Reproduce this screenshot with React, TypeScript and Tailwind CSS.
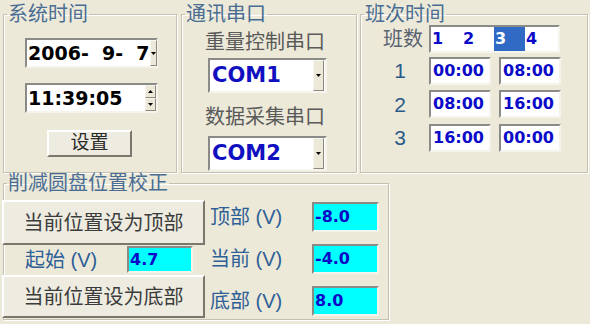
const cjk = "font-['Liberation_Sans','Noto_Sans_CJK_SC',sans-serif]";
const num = "font-['DejaVu_Sans',sans-serif] font-bold";
const sunken = "border-2 border-t-[#8a8a86] border-l-[#8a8a86] border-b-[#f4f3ec] border-r-[#f4f3ec]";
const raised = "border-2 border-t-white border-l-white border-b-[#7a786c] border-r-[#7a786c] bg-[#eeece1]";
const small = "border border-t-[#f7f6f0] border-l-[#f7f6f0] border-b-[#8c8a7e] border-r-[#8c8a7e] bg-[#ECE9D8]";
const group = "border border-[#c4c1b0] shadow-[inset_1px_1px_0_#fff,1px_1px_0_#fff]";
const legend = "ml-[3px] px-[1px] text-[20px] leading-[22px] text-[#4a6d93]";

function Arrow({ up }: { up?: boolean }) {
  return (
    <svg width="5" height="3" viewBox="0 0 5 3">
      <path d={up ? "M2.5 0L5 3H0z" : "M0 0h5L2.5 3z"} fill="#000" />
    </svg>
  );
}

function Combo({ text }: { text: string }) {
  return (
    <div className={`${sunken} ml-[26px] flex h-[35px] w-[119px] items-center bg-white`}>
      <span className={`${num} flex-1 pl-[2px] text-[21px] text-[#1010c0]`}>{text}</span>
      <div className={`${small} mr-[1px] flex h-full w-[11px] items-center justify-center`}>
        <Arrow />
      </div>
    </div>
  );
}

function TimeBox({ text }: { text: string }) {
  return (
    <div className={`${sunken} flex h-[28px] w-[62px] items-center bg-white pl-[2px]`}>
      <span className={`${num} text-[16px] text-[#0a0ac8]`}>{text}</span>
    </div>
  );
}

function Cyan({ text, className = "" }: { text: string; className?: string }) {
  return (
    <div className={`${sunken} flex items-center bg-[#00ffff] pl-[1px] ${className}`}>
      <span className={`${num} text-[16px] text-[#0a0ac8]`}>{text}</span>
    </div>
  );
}

export default function App() {
  return (
    <div className={`${cjk} h-[324px] w-[590px] overflow-hidden bg-[#ECE9D8] pt-[3px]`}>
      <div className="flex">
        <fieldset className={`${group} ml-[3px] h-[170px] w-[174px]`}>
          <legend className={legend}>系统时间</legend>
          <div className={`${sunken} ml-[21px] mt-[13px] flex h-[30px] w-[133px] items-center bg-white`}>
            <span className={`${num} flex-1 whitespace-pre pl-[1px] text-[19px] text-black`}>2006-  9-  7</span>
            <div className={`${small} flex h-full w-[11px] items-center justify-center`}>
              <Arrow />
            </div>
          </div>
          <div className={`${sunken} ml-[21px] mt-[15px] flex h-[30px] w-[133px] items-center bg-white`}>
            <span className={`${num} flex-1 pl-[1px] text-[19px] text-black`}>11:39:05</span>
            <div className="flex h-full w-[11px] flex-col">
              <div className={`${small} flex flex-1 items-center justify-center`}>
                <Arrow up />
              </div>
              <div className={`${small} flex flex-1 items-center justify-center`}>
                <Arrow />
              </div>
            </div>
          </div>
          <button className={`${raised} ml-[43px] mt-[17px] flex h-[27px] w-[85px] items-center justify-center text-[19px] text-[#2a2a2a]`}>
            设置
          </button>
        </fieldset>

        <fieldset className={`${group} ml-[4px] h-[170px] w-[176px]`}>
          <legend className={legend}>通讯串口</legend>
          <div className="ml-[23px] mt-[6px] text-[20px] leading-[22px] text-[#5a5a5a]">重量控制串口</div>
          <div className="mt-[5px]">
            <Combo text="COM1" />
          </div>
          <div className="ml-[23px] mt-[13px] text-[20px] leading-[22px] text-[#5a5a5a]">数据采集串口</div>
          <div className="mt-[8px]">
            <Combo text="COM2" />
          </div>
        </fieldset>

        <fieldset className={`${group} ml-[3px] h-[170px] w-[228px]`}>
          <legend className={legend}>班次时间</legend>
          <div className="flex items-center">
            <div className="w-[68px] pr-[6px] text-right text-[20px] leading-[22px] text-[#5a6270]">班数</div>
            <div className={`${sunken} flex h-[28px] w-[131px] bg-white`}>
              {["1", "2", "3", "4"].map((n, i) => (
                <div
                  key={n}
                  className={`${num} flex items-center pl-[1px] text-[16px] ${i === 2 ? "bg-[#316ac5] text-white" : "text-[#0a0ac8]"} ${i === 1 ? "w-[32px]" : "w-[31px]"}`}
                >
                  {n}
                </div>
              ))}
            </div>
          </div>
          <div className="mt-[2px] flex flex-col gap-[2px]">
            {[
              ["1", "00:00", "08:00"],
              ["2", "08:00", "16:00"],
              ["3", "16:00", "00:00"],
            ].map(([n, a, b]) => (
              <div key={n} className="flex items-center">
                <div className="w-[68px] pl-[10px] text-center font-['Liberation_Sans',sans-serif] text-[21px] text-[#2a5a8a]">{n}</div>
                <TimeBox text={a} />
                <div className="ml-[8px]">
                  <TimeBox text={b} />
                </div>
              </div>
            ))}
          </div>
        </fieldset>
      </div>

      <fieldset className={`${group} ml-[3px] mt-[-1px] h-[148px] w-[386px]`}>
        <legend className={legend}>削减圆盘位置校正</legend>
        <div className="flex">
          <div className="ml-[-2px] flex w-[203px] flex-col">
            <button className={`${raised} mt-[6px] flex h-[45px] items-center justify-center text-[20px] text-[#3c3c3c]`}>
              当前位置设为顶部
            </button>
            <div className="flex h-[30px] items-start">
              <div className="ml-[23px] mt-[4px] w-[102px] text-[20px] leading-[22px] text-[#2f5f97]">起始 (V)</div>
              <Cyan text="4.7" className="mt-[1px] h-[27px] w-[66px]" />
            </div>
            <button className={`${raised} flex h-[43px] items-center justify-center text-[20px] text-[#3c3c3c]`}>
              当前位置设为底部
            </button>
          </div>
          <div className="ml-[5px] mt-[8px] flex flex-col gap-[12px]">
            {[
              ["顶部 (V)", "-8.0"],
              ["当前 (V)", "-4.0"],
              ["底部 (V)", "8.0"],
            ].map(([l, v]) => (
              <div key={l} className="flex h-[30px] items-center">
                <div className="w-[102px] text-[20px] leading-[22px] text-[#2f5f97]">{l}</div>
                <Cyan text={v} className="h-[30px] w-[67px]" />
              </div>
            ))}
          </div>
        </div>
      </fieldset>
    </div>
  );
}
